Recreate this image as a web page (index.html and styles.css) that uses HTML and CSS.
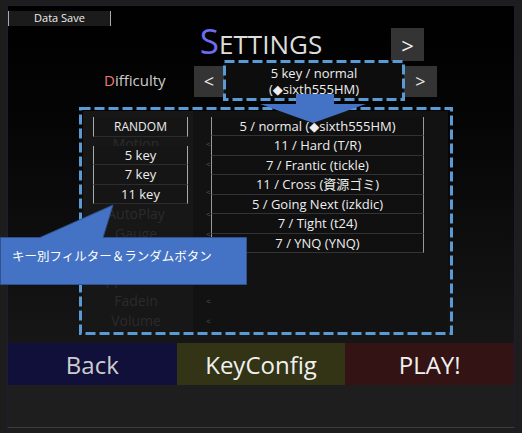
FILE: index.html
```html
<!DOCTYPE html>
<html>
<head>
<meta charset="utf-8">
<link rel="stylesheet" href="styles.css">
</head>
<body>
<div class="page">
  <div class="screen">
    <div class="stage">
      <div class="topbar"><div class="save-btn">Data Save</div></div>
      <div class="header">
        <div></div>
        <h1 class="title"><span class="cap">S</span>ETTINGS</h1>
        <div class="hdr-right"><div class="nav-btn big">&gt;</div></div>
      </div>
      <div class="diff-row">
        <div class="diff-label"><span class="red">D</span>ifficulty</div>
        <div class="nav-btn">&lt;</div>
        <div class="diff-box">5 key / normal<br>(◆sixth555HM)</div>
        <div class="nav-btn wide">&gt;</div>
      </div>
      <div class="panel">
        <div class="labels">
          <div class="lab"></div>
          <div class="lab"><span class="name">Motion</span><span class="lt">&lt;</span></div>
          <div class="lab"><span class="name">Scroll</span><span class="lt">&lt;</span></div>
          <div class="lab gap8"><span class="name">Shuffle</span><span class="lt">&lt;</span></div>
          <div class="lab gap2"><span class="name">AutoPlay</span><span class="lt">&lt;</span></div>
          <div class="lab"><span class="name">Gauge</span><span class="lt">&lt;</span></div>
          <div class="lab gap2"></div>
          <div class="lab gap3"><span class="name">Appearance</span></div>
          <div class="lab gap2"><span class="name">Fadein</span><span class="lt">&lt;</span></div>
          <div class="lab"><span class="name">Volume</span><span class="lt">&lt;</span></div>
        </div>
        <div class="filters">
          <div class="fbtn random">RANDOM</div>
          <div class="fgroup">
            <div class="fbtn">5 key</div>
            <div class="fbtn">7 key</div>
            <div class="fbtn">11 key</div>
          </div>
        </div>
        <div class="list">
          <div class="row">5 / normal (◆sixth555HM)</div>
          <div class="row">11 / Hard (T/R)</div>
          <div class="row">7 / Frantic (tickle)</div>
          <div class="row">11 / Cross (資源ゴミ)</div>
          <div class="row">5 / Going Next (izkdic)</div>
          <div class="row">7 / Tight (t24)</div>
          <div class="row">7 / YNQ (YNQ)</div>
        </div>
      </div>
    </div>
    <div class="actions">
      <div class="act back">Back</div>
      <div class="act key">KeyConfig</div>
      <div class="act play">PLAY!</div>
    </div>
    <div class="footer"></div>
  </div>

  <svg class="annot" width="522" height="433" viewBox="0 0 522 433">
    <rect x="224.5" y="61.5" width="179" height="38" class="dash"/>
    <rect x="80.5" y="108.5" width="371" height="225" class="dash"/>
    <polygon class="arrow" points="296,94 334,94 334,104 366,104 313,123 260,104 296,104"/>
    <path class="bubble" d="M0.5,237.5 L40,237.5 L113,205 L103,237.5 L246.5,237.5 L246.5,284.5 L0.5,284.5 Z"/>
  </svg>
  <div class="callout">キー別フィルター＆ランダムボタン</div>
</div>
</body>
</html>
```

FILE: styles.css
```css
* { box-sizing: border-box; margin: 0; padding: 0; }
html, body { background: #1d1d1d; }
body {
  font-family: "Open Sans", "DejaVu Sans", "Noto Sans CJK JP", sans-serif;
  color: #eee;
}
.page {
  position: relative;
  width: 522px;
  height: 433px;
  overflow: hidden;
  padding: 5px 7px 0;
}
.screen {
  width: 508px;
  height: 423px;
  border: 1px solid #1d1d36;
  border-bottom-color: #3c3c3c;
  display: flex;
  flex-direction: column;
}
.stage {
  height: 337px;
  background: linear-gradient(#000 0%, #050505 35%, #161616 100%);
  display: flex;
  flex-direction: column;
}
.topbar { padding-top: 5px; }
.save-btn {
  width: 103px;
  height: 15px;
  background: #1b1b1b;
  border-left: 1px solid #aaa;
  border-right: 1px solid #aaa;
  font-size: 11px;
  line-height: 14px;
  text-align: center;
  color: #eee;
}
.header {
  margin-top: 2px;
  height: 33px;
  display: grid;
  grid-template-columns: 1fr auto 1fr;
  grid-template-rows: 33px;
}
.title {
  margin-top: -5px;
  font-weight: 400;
  font-size: 26px;
  line-height: 35px;
  color: #ddd;
  white-space: nowrap;
}
.title .cap { font-size: 35px; color: #6c6cf4; }
.hdr-right { padding-left: 69px; }
.nav-btn {
  width: 30px;
  height: 31px;
  background: #343434;
  color: #eee;
  font-size: 18px;
  line-height: 1;
  display: flex;
  align-items: center;
  justify-content: center;
}
.nav-btn.big { width: 33px; height: 33px; font-size: 22px; }
.nav-btn.wide { width: 33px; }
.diff-row {
  margin-top: 1px;
  height: 38px;
  display: flex;
  align-items: center;
  padding-left: 96px;
}
.diff-label { width: 90px; font-size: 15px; color: #ccc; margin-top: -2px; }
.diff-label .red { color: #f07878; }
.diff-box {
  width: 180px;
  height: 36px;
  background: #0d0d0d;
  font-size: 13px;
  line-height: 16px;
  text-align: center;
  padding-top: 2px;
}
.panel {
  position: relative;
  margin: 11px 0 0 75px;
  width: 365px;
  height: 220px;
  background: #121212;
  display: flex;
  align-items: flex-start;
  padding: 6px 0 0 10px;
  gap: 23px;
}
.labels {
  position: absolute;
  left: 0;
  top: 0;
  bottom: 0;
  width: 140px;
  padding-top: 2px;
  background: linear-gradient(to right, #171717 110px, transparent 110px);
}
.lab { height: 20px; display: flex; align-items: center; }
.lab .name { width: 106px; text-align: center; font-size: 14px; color: #2b2b2b; }
.lab .lt { margin-left: 17px; font-size: 8px; color: #555; }
.lab.gap8 { margin-top: 8px; }
.lab.gap2 { margin-top: 2px; }
.lab.gap3 { margin-top: 3px; }
.filters {
  position: relative;
  width: 95px;
  display: flex;
  flex-direction: column;
  gap: 9px;
}
.fbtn {
  height: 19.4px;
  background: #151515;
  border-left: 1px solid #aaa;
  border-right: 1px solid #aaa;
  border-bottom: 1px solid #2c2c2c;
  font-size: 13px;
  line-height: 18px;
  text-align: center;
  color: #eee;
}
.fbtn.random { height: 20px; font-size: 12px; line-height: 19px; }
.list { position: relative; width: 213px; }
.row {
  height: 19.43px;
  background: #101010;
  border-left: 1px solid #999;
  border-right: 1px solid #999;
  border-bottom: 1px solid #333;
  font-size: 13px;
  line-height: 19px;
  text-align: center;
  color: #eee;
  white-space: nowrap;
}
.actions { display: flex; height: 42px; }
.act {
  flex: 1;
  display: flex;
  align-items: center;
  justify-content: center;
  font-size: 24px;
  color: #f0f0f0;
}
.back { background: #10103a; color: #cdcdcd; }
.key { background: #333316; }
.play { background: #331313; }
.footer { flex: 1; background: #1e1e1e; }

.annot { position: absolute; left: 0; top: 0; pointer-events: none; }
.dash { fill: none; stroke: #5b9bd5; stroke-width: 3; stroke-dasharray: 10 4; }
.arrow { fill: #4472c4; }
.bubble { fill: #4472c4; stroke: #2f528f; stroke-width: 1; }
.callout {
  position: absolute;
  left: 12px;
  top: 247px;
  font-family: "Noto Sans CJK JP", sans-serif;
  font-size: 12.5px;
  line-height: 18px;
  color: #fff;
  white-space: nowrap;
}
```
